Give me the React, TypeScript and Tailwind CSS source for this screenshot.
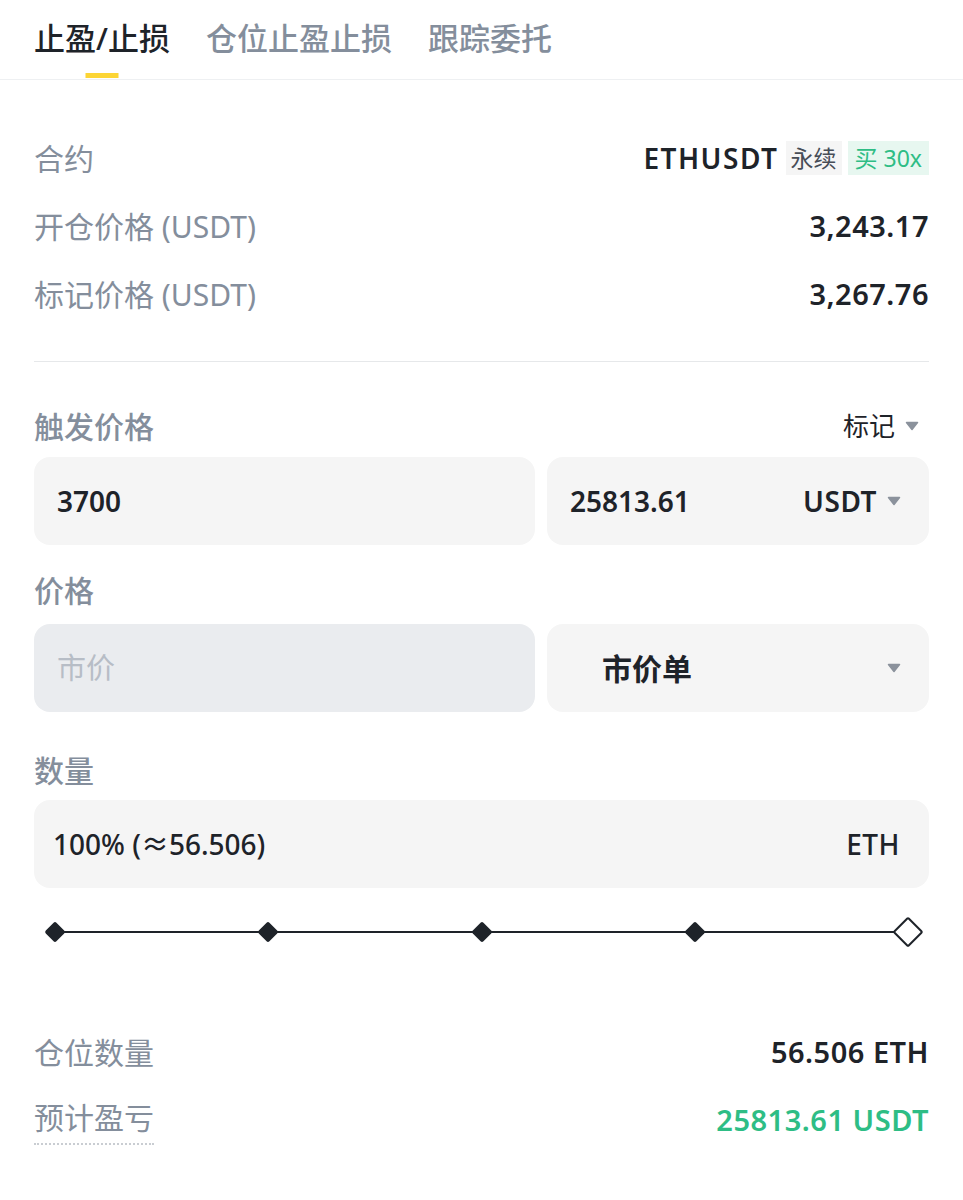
import { useState } from "react";

const FONT = {
  fontFamily: '"Noto Sans", "Noto Sans CJK SC", sans-serif',
};

const tabs = ["止盈/止损", "仓位止盈止损", "跟踪委托"];

function Caret({ className = "" }: { className?: string }) {
  return (
    <svg width="14" height="10" viewBox="0 0 14 10" className={className}>
      <path d="M1.5 1.5 L12.5 1.5 L7 8.5 Z" fill="#8b929c" strokeLinejoin="round" stroke="#8b929c" strokeWidth="1.5" />
    </svg>
  );
}

function InfoRow({ label, children }: { label: string; children: React.ReactNode }) {
  return (
    <div className="flex h-[68px] items-center justify-between">
      <span className="text-[30px] text-[#848e9c]">{label}</span>
      {children}
    </div>
  );
}

function Slider({ value }: { value: number }) {
  const marks = [0, 25, 50, 75, 100];
  return (
    <div className="relative mx-[21px] mt-[24px] h-[40px]">
      <div className="absolute left-0 right-0 top-[19px] h-[2px] bg-[#1e2329]" />
      {marks.map((m) => {
        const active = m === value;
        return (
          <div
            key={m}
            className="absolute top-1/2"
            style={{ left: `${m}%`, transform: "translate(-50%, -50%)" }}
          >
            {active ? (
              <div className="h-[22px] w-[22px] rotate-45 rounded-[2px] border-2 border-[#1e2329] bg-white" />
            ) : (
              <div className="h-[15px] w-[15px] rotate-45 rounded-[2px] bg-[#1e2329]" />
            )}
          </div>
        );
      })}
    </div>
  );
}

export default function App() {
  const [tab, setTab] = useState(0);

  return (
    <div className="min-h-[1200px] w-full bg-white text-[#1e2329]" style={FONT}>
      {/* tabs */}
      <div className="flex h-[80px] gap-[36px] border-b border-[#eef0f2] px-[34px]">
        {tabs.map((t, i) => (
          <button
            key={t}
            onClick={() => setTab(i)}
            className={`relative flex items-center pb-[2px] text-[31px] font-medium ${
              i === tab ? "text-[#1e2329]" : "text-[#848e9c]"
            }`}
          >
            {t}
            {i === tab && (
              <span className="absolute bottom-[1px] left-1/2 h-[5px] w-[33px] -translate-x-1/2 bg-[#fcd535]" />
            )}
          </button>
        ))}
      </div>

      <div className="px-[34px]">
        {/* contract info */}
        <div className="pt-[44px]">
          <InfoRow label="合约">
            <div className="flex items-center gap-[6px]">
              <span className="mr-[1px] text-[28px] font-semibold tracking-[1.5px]">ETHUSDT</span>
              <span className="flex h-[34px] items-center bg-[#f5f5f5] px-[5px] text-[23px] text-[#474d57]">永续</span>
              <span className="flex h-[34px] items-center bg-[#e7f7f0] px-[7px] text-[23px] text-[#2ebd85]">买 30x</span>
            </div>
          </InfoRow>
          <InfoRow label="开仓价格 (USDT)">
            <span className="text-[29px] font-semibold tracking-[0.5px]">3,243.17</span>
          </InfoRow>
          <InfoRow label="标记价格 (USDT)">
            <span className="text-[29px] font-semibold tracking-[0.5px]">3,267.76</span>
          </InfoRow>
        </div>

        <div className="mt-[33px] h-px bg-[#e6e8ea]" />

        {/* trigger price */}
        <div className="mt-[44px] mb-[11px] flex h-[40px] items-center justify-between">
          <span className="text-[30px] font-medium text-[#848e9c]">触发价格</span>
          <span className="flex items-center gap-[10px] pr-[10px] text-[26px]">
            标记
            <Caret />
          </span>
        </div>
        <div className="flex gap-[12px]">
          <div className="flex h-[88px] flex-1 items-center rounded-[16px] bg-[#f5f5f5] px-[23px] text-[28px] font-semibold">
            3700
          </div>
          <div className="flex h-[88px] w-[382px] items-center justify-between rounded-[16px] bg-[#f5f5f5] pl-[23px] pr-[28px] text-[28px] font-semibold">
            <span>25813.61</span>
            <span className="flex items-center gap-[10px] tracking-[0.5px]">
              USDT
              <Caret />
            </span>
          </div>
        </div>

        {/* price */}
        <div className="mt-[25px] mb-[14px] flex h-[40px] items-center">
          <span className="text-[30px] font-medium text-[#848e9c]">价格</span>
        </div>
        <div className="flex gap-[12px]">
          <div className="flex h-[88px] flex-1 items-center rounded-[16px] bg-[#eaecef] px-[23px] text-[29px] text-[#b7bdc6]">
            市价
          </div>
          <div className="flex h-[88px] w-[382px] items-center justify-between rounded-[16px] bg-[#f5f5f5] pl-[55px] pr-[28px] text-[30px] font-semibold">
            <span>市价单</span>
            <Caret />
          </div>
        </div>

        {/* amount */}
        <div className="mt-[38px] mb-[10px] flex h-[40px] items-center">
          <span className="text-[30px] font-medium text-[#848e9c]">数量</span>
        </div>
        <div className="flex h-[88px] items-center justify-between rounded-[16px] bg-[#f5f5f5] pl-[19px] pr-[29px] text-[28px] font-medium">
          <span>100% (≈56.506)</span>
          <span className="tracking-[0.5px]">ETH</span>
        </div>

        <Slider value={100} />

        {/* summary */}
        <div className="mt-[66px]">
          <InfoRow label="仓位数量">
            <span className="text-[29px] font-semibold tracking-[0.5px]">56.506 ETH</span>
          </InfoRow>
          <div className="flex h-[68px] items-center justify-between">
            <span className="border-b-2 border-dotted border-[#c9cdd2] pb-[3px] text-[30px] text-[#848e9c]">
              预计盈亏
            </span>
            <span className="text-[29px] font-semibold tracking-[0.5px] text-[#2ebd85]">25813.61 USDT</span>
          </div>
        </div>
      </div>
    </div>
  );
}
